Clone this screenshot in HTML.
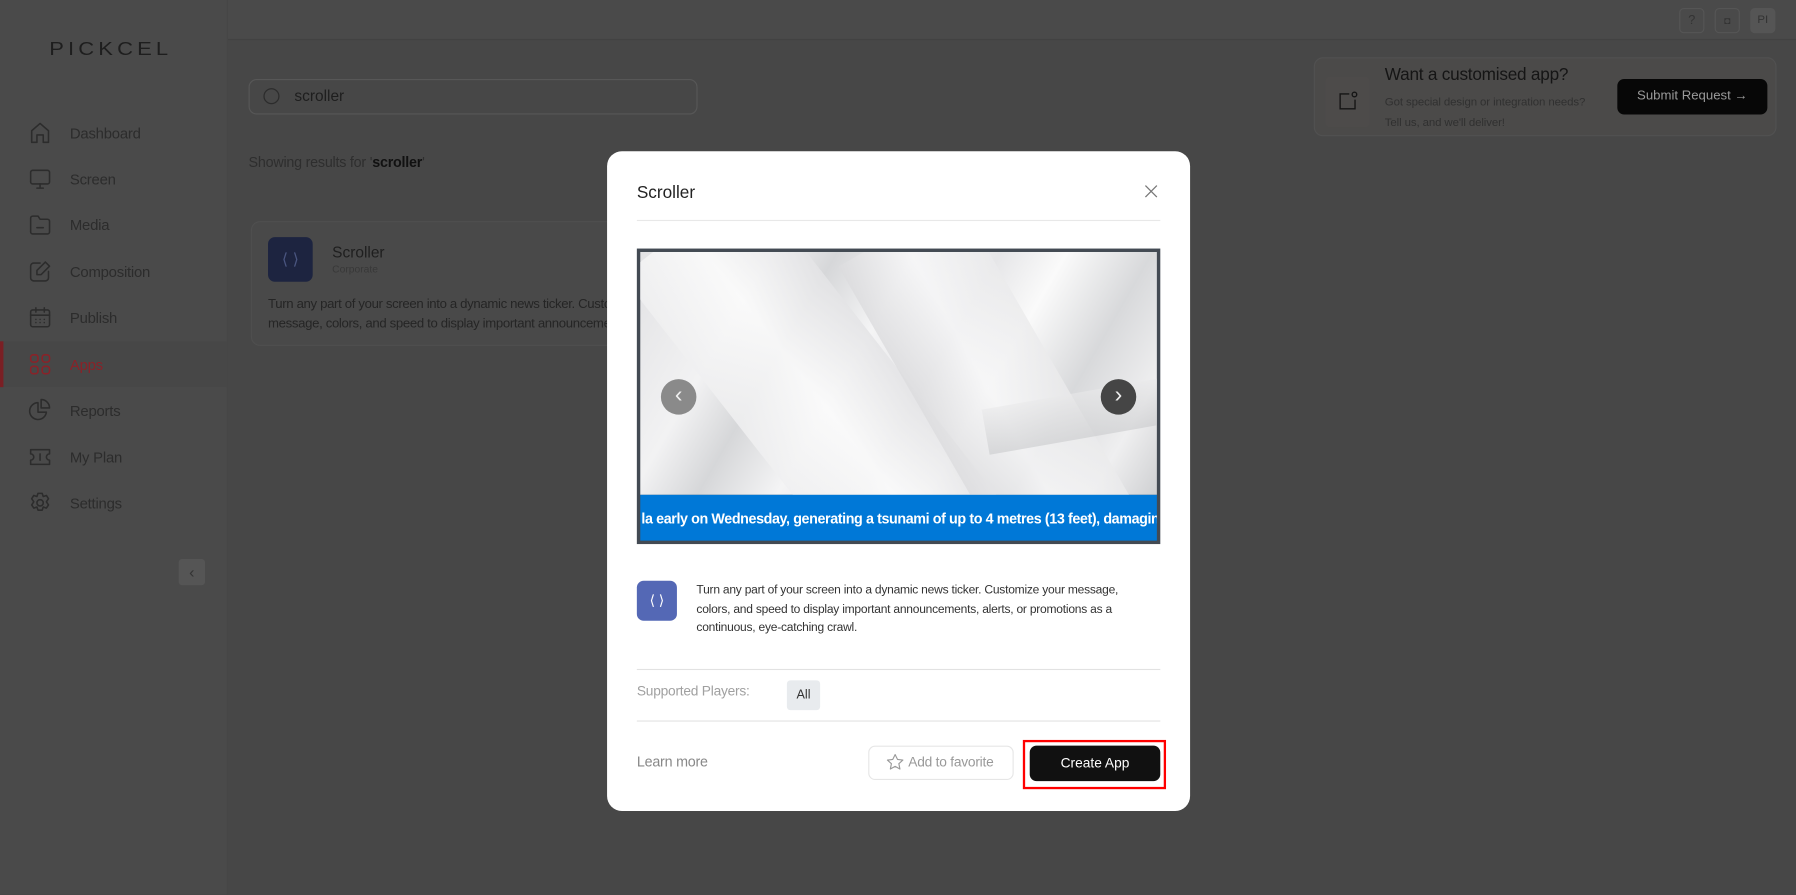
<!DOCTYPE html>
<html><head><meta charset="utf-8"><style>
*{box-sizing:border-box;margin:0;padding:0}
html,body{width:1796px;height:895px;overflow:hidden;background:#474747;font-family:"Liberation Sans",sans-serif}
#w{position:absolute;left:0;top:0;width:1568px;height:781px;transform:scale(1.14541);transform-origin:0 0}
.a{position:absolute}
.nav{position:absolute;left:0;width:199px;height:40px;display:flex;align-items:center;font-size:13px;letter-spacing:-.2px;color:#2c2c2c}
.nav svg{position:absolute;left:24px;width:22px;height:22px;fill:none;stroke:#2c2c2c;stroke-width:1.5;stroke-linecap:round;stroke-linejoin:round}
.nav span{position:absolute;left:61px}
</style></head><body><div id="w">
<div class="a" style="left:0;top:0;width:199px;height:781px;background:#4a4a4a;border-right:1px solid #464646"></div>
<div class="a" style="left:199px;top:0;width:1369px;height:35px;background:#4a4a4a;border-bottom:1px solid #424242"></div>
<div class="a" style="left:43px;top:35px;font-size:16px;letter-spacing:3px;color:#1e1e1e;transform:scaleX(1.2);transform-origin:0 0">PICKCEL</div>
<div class="nav" style="top:96px"><svg viewBox="0 0 24 24"><path d="M4 21V10l8-7 8 7v11h-5v-7H9v7z"/></svg><span>Dashboard</span></div>
<div class="nav" style="top:136px"><svg viewBox="0 0 24 24"><rect x="3" y="4" width="18" height="13" rx="2"/><path d="M12 17v3M9 21h6"/></svg><span>Screen</span></div>
<div class="nav" style="top:176px"><svg viewBox="0 0 24 24"><path d="M3 6a2 2 0 012-2h5l2 3h7a2 2 0 012 2v10a2 2 0 01-2 2H5a2 2 0 01-2-2z"/><path d="M9 15h6"/></svg><span>Media</span></div>
<div class="nav" style="top:217px"><svg viewBox="0 0 24 24"><path d="M12 4H6a3 3 0 00-3 3v11a3 3 0 003 3h11a3 3 0 003-3v-6"/><path d="M17 3l4 4-8 8H9v-4z"/></svg><span>Composition</span></div>
<div class="nav" style="top:257px"><svg viewBox="0 0 24 24"><rect x="3" y="5" width="18" height="16" rx="2"/><path d="M8 3v4M16 3v4M3 10h18M8 14h.01M12 14h.01M16 14h.01M8 17h.01M12 17h.01M16 17h.01"/></svg><span>Publish</span></div>
<div class="a" style="left:0;top:298px;width:199px;height:40px;background:#474747;border-left:3px solid #7a1f24"></div>
<div class="nav" style="top:298px;color:#8a2228"><svg viewBox="0 0 24 24" style="stroke:#8a2228"><rect x="3" y="3" width="7" height="7" rx="2.5"/><rect x="14" y="3" width="7" height="7" rx="2.5"/><rect x="3" y="14" width="7" height="7" rx="2.5"/><rect x="14" y="14" width="7" height="7" rx="2.5"/></svg><span>Apps</span></div>
<div class="nav" style="top:338px"><svg viewBox="0 0 24 24"><path d="M10 5a8 8 0 108 9h-8z"/><path d="M13 2a8 8 0 018 8h-8z"/></svg><span>Reports</span></div>
<div class="nav" style="top:379px"><svg viewBox="0 0 24 24"><path d="M3 5h18v4a3 3 0 000 6v4H3v-4a3 3 0 000-6z"/><path d="M12 9v6"/></svg><span>My Plan</span></div>
<div class="nav" style="top:419px"><svg viewBox="0 0 24 24"><circle cx="12" cy="12" r="3"/><path d="M10 3h4l1 3 3-1 2 3-2 3 2 3-2 3-3-1-1 3h-4l-1-3-3 1-2-3 2-3-2-3 2-3 3 1z"/></svg><span>Settings</span></div>
<div class="a" style="left:156px;top:488px;width:23px;height:23px;background:#555;border-radius:3px;color:#333;font-size:14px;text-align:center;line-height:23px">‹</div>
<div class="a" style="left:217px;top:69px;width:392px;height:31px;border:1px solid #575757;border-radius:7px"></div>
<svg class="a" style="left:229px;top:76px" width="17" height="17" viewBox="0 0 17 17"><circle cx="8" cy="8" r="6.5" fill="none" stroke="#2c2c2c" stroke-width="1.1"/></svg>
<div class="a" style="left:257px;top:76px;font-size:13.5px;color:#1e1e1e">scroller</div>
<div class="a" style="left:217px;top:135px;font-size:12.5px;letter-spacing:-.2px;color:#2e2e2e">Showing results for '<b style="color:#111">scroller</b>'</div>
<div class="a" style="left:219px;top:193px;width:400px;height:109px;border:1px solid #4f4f4f;border-radius:8px;background:#494949"></div>
<div class="a" style="left:234px;top:207px;width:39px;height:39px;background:#1d2440;border-radius:6px;color:#4a5680;font-size:14px;text-align:center;line-height:39px">⟨ ⟩</div>
<div class="a" style="left:290px;top:213px;font-size:13.5px;color:#1e1e1e">Scroller</div>
<div class="a" style="left:290px;top:230px;font-size:9px;color:#383838">Corporate</div>
<div class="a" style="left:234px;top:258px;font-size:11.5px;letter-spacing:-.3px;line-height:17px;color:#252525;white-space:nowrap">Turn any part of your screen into a dynamic news ticker. Customize your<br>message, colors, and speed to display important announcements</div>
<div class="a" style="left:1466px;top:7px;width:22px;height:22px;border:1px solid #555;border-radius:4px;color:#333;font-size:11px;text-align:center;line-height:20px">?</div>
<div class="a" style="left:1497px;top:7px;width:22px;height:22px;border:1px solid #555;border-radius:4px;color:#333;font-size:9px;text-align:center;line-height:20px">◘</div>
<div class="a" style="left:1528px;top:7px;width:22px;height:22px;background:#555;border-radius:4px;color:#333;font-size:10px;text-align:center;line-height:22px">PI</div>
<div class="a" style="left:1147px;top:50px;width:404px;height:69px;border:1px solid #515151;border-radius:8px;background:#4b4a49"></div>
<div class="a" style="left:1157px;top:67px;width:39px;height:44px;background:#4d4b4a;border-radius:4px"></div>
<svg class="a" style="left:1167px;top:78px" width="20" height="20" viewBox="0 0 20 20"><path d="M11 4H3v13h13V9" fill="none" stroke="#151515" stroke-width="1.2"/><circle cx="15.5" cy="4.5" r="2" fill="none" stroke="#151515" stroke-width="1.2"/></svg>
<div class="a" style="left:1209px;top:57px;font-size:15px;letter-spacing:-.2px;color:#151515">Want a customised app?</div>
<div class="a" style="left:1209px;top:81px;font-size:10px;letter-spacing:-.1px;line-height:18px;color:#303030">Got special design or integration needs?<br>Tell us, and we'll deliver!</div>
<div class="a" style="left:1412px;top:69px;width:131px;height:31px;background:#070707;border-radius:6px;color:#9a9a9a;font-size:11.5px;text-align:center;line-height:31px">Submit Request →</div>
<div class="a" style="left:530px;top:132px;width:509px;height:576px;background:#fff;border-radius:13px"></div>
<div class="a" style="left:556px;top:160px;font-size:15px;color:#222">Scroller</div>
<svg class="a" style="left:999px;top:161px" width="12" height="12" viewBox="0 0 12 12"><path d="M1 1l10 10M11 1L1 11" stroke="#777" stroke-width="1.1"/></svg>
<div class="a" style="left:556px;top:192px;width:457px;height:1px;background:#e8e8e8"></div>
<div class="a" style="left:556px;top:217px;width:457px;height:258px;background:#434a53"></div>
<div class="a" style="left:559px;top:220px;width:451px;height:212px;overflow:hidden;background:linear-gradient(120deg,#e2e2e4 0%,#f2f2f3 20%,#d6d7d9 30%,#f4f4f5 42%,#e6e6e8 55%,#fafafa 65%,#d8d9db 78%,#efeff0 90%,#cfd0d2 100%)">
<div class="a" style="left:80px;top:-60px;width:140px;height:360px;background:linear-gradient(90deg,#f0f0f1,#fbfbfb,#e4e4e6);transform:rotate(-38deg);opacity:.85"></div>
<div class="a" style="left:250px;top:-40px;width:120px;height:340px;background:linear-gradient(90deg,#dcdcde,#f6f6f7,#ebebec);transform:rotate(-30deg);opacity:.8"></div>
<div class="a" style="left:300px;top:120px;width:200px;height:40px;background:linear-gradient(180deg,#e9e9ea,#c9cacc);transform:rotate(-10deg);opacity:.6"></div>
</div>
<div class="a" style="left:577px;top:331px;width:31px;height:31px;border-radius:50%;background:#8a8a8a;color:#eee;font-size:20px;text-align:center;line-height:29px">‹</div>
<div class="a" style="left:961px;top:331px;width:31px;height:31px;border-radius:50%;background:#454545;color:#eee;font-size:20px;text-align:center;line-height:29px">›</div>
<div class="a" style="left:559px;top:432px;width:451px;height:40px;background:#0078d7;overflow:hidden;white-space:nowrap;color:#fff;font-weight:bold;font-size:12.5px;letter-spacing:-.35px;line-height:42px;padding-left:1px">la early on Wednesday, generating a tsunami of up to 4 metres (13 feet), damaging</div>
<div class="a" style="left:556px;top:507px;width:35px;height:35px;background:#5468b5;border-radius:6px;color:#fff;font-size:12px;text-align:center;line-height:35px">⟨ ⟩</div>
<div class="a" style="left:608px;top:507px;width:400px;font-size:10.5px;letter-spacing:-.2px;line-height:16.5px;color:#333">Turn any part of your screen into a dynamic news ticker. Customize your message, colors, and speed to display important announcements, alerts, or promotions as a continuous, eye-catching crawl.</div>
<div class="a" style="left:556px;top:584px;width:457px;height:1px;background:#e2e2e2"></div>
<div class="a" style="left:556px;top:596px;font-size:12px;letter-spacing:-.2px;color:#a0a0a0">Supported Players:</div>
<div class="a" style="left:687px;top:594px;width:29px;height:26px;background:#e8ebee;border-radius:3px;font-size:11px;color:#333;text-align:center;line-height:26px">All</div>
<div class="a" style="left:556px;top:629px;width:457px;height:1px;background:#e2e2e2"></div>
<div class="a" style="left:556px;top:658px;font-size:12.5px;letter-spacing:-.2px;color:#888">Learn more</div>
<div class="a" style="left:758px;top:651px;width:127px;height:30px;border:1px solid #e6e6e6;border-radius:6px"></div>
<svg class="a" style="left:773px;top:657px" width="17" height="17" viewBox="0 0 24 24"><path d="M12 2.5l2.9 6 6.6.8-4.9 4.5 1.3 6.5L12 17l-5.9 3.3 1.3-6.5-4.9-4.5 6.6-.8z" fill="none" stroke="#999" stroke-width="1.4" stroke-linejoin="round"/></svg>
<div class="a" style="left:793px;top:658px;font-size:12px;letter-spacing:-.2px;color:#999">Add to favorite</div>
<div class="a" style="left:893px;top:646px;width:125px;height:43px;border:2px solid #ff0000"></div>
<div class="a" style="left:899px;top:651px;width:114px;height:31px;background:#111;border-radius:6px;color:#fff;font-size:12px;text-align:center;line-height:31px">Create App</div>
</div></body></html>
